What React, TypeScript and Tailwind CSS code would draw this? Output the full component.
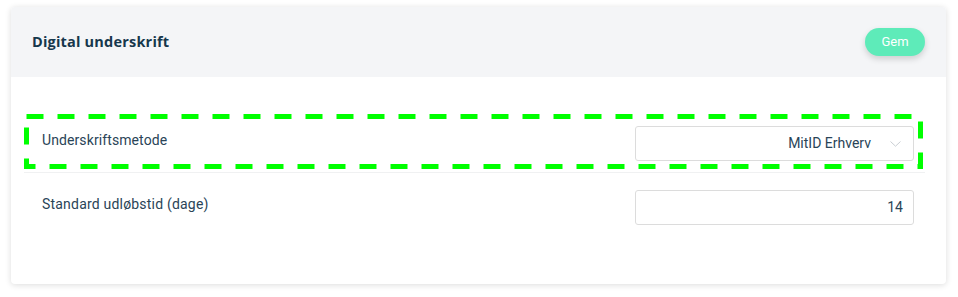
import React from "react";

export default function App() {
  return (
    <div className="w-[958px] h-[297px] bg-white pt-[7px] pl-[11px] font-['Roboto',sans-serif]">
      <div className="w-[935px] h-[277px] bg-white rounded-[4px] shadow-[0_1px_6px_rgba(0,0,0,0.14)] overflow-hidden">
        <div className="h-[70px] bg-[#f4f5f7] flex items-center justify-between pl-[21px] pr-[21px]">
          <h2 className="font-['Open_Sans',sans-serif] font-bold text-[14.5px] tracking-[0.2px] text-[#16374c] -mt-[1px]">
            Digital underskrift
          </h2>
          <button className="w-[60px] h-[28px] rounded-full bg-[#5eebb9] text-white text-[13px] shadow-[0_3px_6px_rgba(0,0,0,0.16)]">
            Gem
          </button>
        </div>
        <div className="pt-[41px] pl-[13px] pr-[21px]">
          <div className="relative flex items-start justify-between pt-2 pb-[11px] pl-[18px] pr-[11px] border-b border-[#f0f1f2]">
            <span className="pt-[5px] leading-[18px] text-[14px] tracking-[0.1px] text-[#2a4457]">Underskriftsmetode</span>
            <div className="w-[279px] h-[35px] border border-[#dcdcdc] rounded-[3px] flex items-center justify-end pr-[12px]">
              <span className="text-[14px] text-[#2a4457]">MitID Erhverv</span>
              <svg width="11" height="6" viewBox="0 0 11 6" className="ml-[19px]">
                <path d="M0.5 0.5 L5.5 5.2 L10.5 0.5" fill="none" stroke="#c9ced3" strokeWidth="1" />
              </svg>
            </div>
            <svg width="899" height="55" className="absolute left-0 -top-1 pointer-events-none">
              <rect
                x="2.5"
                y="2.5"
                width="894"
                height="50"
                fill="none"
                stroke="#00ff00"
                strokeWidth="5"
                strokeDasharray="17 14"
              />
            </svg>
          </div>
          <div className="flex items-start justify-between pt-[17px] pl-[18px] pr-[11px]">
            <span className="pt-[5px] leading-[18px] text-[14px] tracking-[0.2px] text-[#2a4457]">Standard udløbstid (dage)</span>
            <div className="w-[279px] h-[35px] border border-[#dcdcdc] rounded-[3px] flex items-center justify-end pr-[10px]">
              <span className="text-[14px] text-[#2a4457]">14</span>
            </div>
          </div>
        </div>
      </div>
    </div>
  );
}
